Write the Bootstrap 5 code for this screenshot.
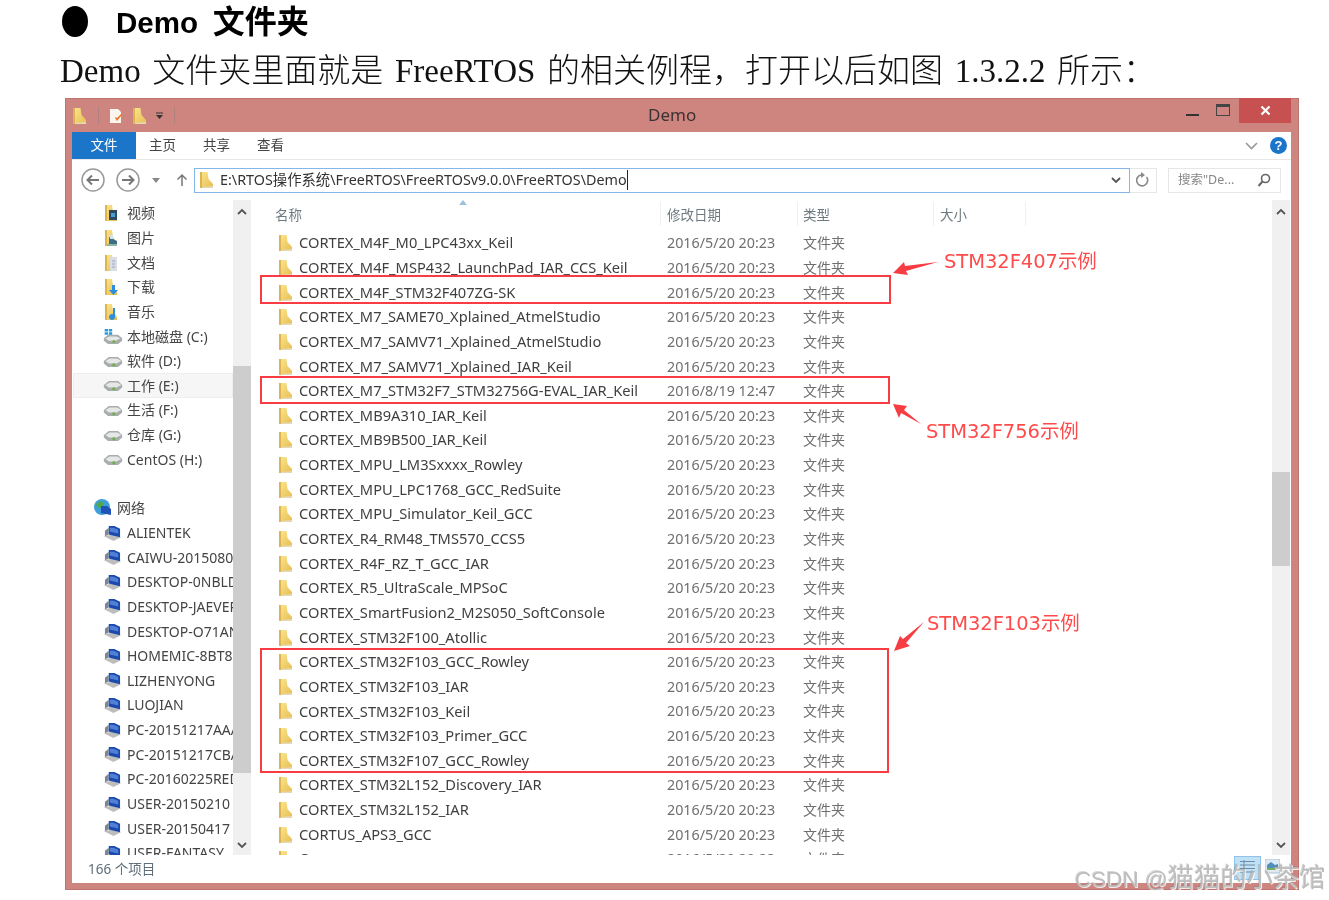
<!doctype html>
<html lang="zh-CN">
<head>
<meta charset="utf-8">
<title>Demo 文件夹</title>
<link href="https://cdn.jsdelivr.net/npm/bootstrap@5.3.0/dist/css/bootstrap.min.css" rel="stylesheet">
<style>
html,body{background:#fff;margin:0;height:900px;overflow:hidden}
.pg{position:relative;width:1329px;height:900px;filter:blur(.55px);font-family:"Noto Sans","Noto Sans CJK SC",sans-serif}
.hd-row{height:44px;padding-left:62px}
.bul{width:26px;height:31px;border-radius:50%;background:#000;margin-right:28px;margin-top:-2px}
.hd-txt{font-family:"Liberation Sans","Noto Sans CJK SC",sans-serif;font-weight:700;font-size:32px;line-height:44px;color:#000;white-space:pre}
.hd-txt i{font-style:normal;font-size:29.5px;margin-right:6px}
.para{height:54px;line-height:54px;padding-left:60px;font-family:"Liberation Serif","Noto Sans CJK SC",serif;font-size:33px;color:#111;white-space:pre;font-weight:300;word-spacing:3.4px}
.win{margin-left:65px;width:1234px;height:792px;background:#cf857f;border:1px solid #bd7570;padding:0 7px 6px 6px}
.tbar{height:33px;position:relative}
.tt{position:absolute;left:576px;top:4px;font-size:17px;line-height:24px;color:#3a3232}
.tsep{width:1px;height:17px;background:#b0807a}
.g11{margin-left:11px}.g9{margin-left:9px}.g8{margin-left:8px}.g10{margin-left:10px}
.tclose{position:absolute;right:0;top:-1px;width:52px;height:25px;background:#c75050}
.tmin{position:absolute;left:1114px;top:15px;width:13px;height:2px;background:#333}
.tmax{position:absolute;left:1144px;top:5px;width:14px;height:12px;border:1px solid #444;border-top-width:3px}
.inner{background:#fff;height:751px}
.rib{height:28px;border-bottom:1px solid #e8e8e8;font-size:13.5px;color:#444}
.ftab{width:64px;height:27px;background:#1b76c9;color:#fff;text-align:center;line-height:27px}
.rt{width:54px;line-height:27px}
.rt.first{margin-left:13px}
.addr{height:38px;padding-left:9px;padding-top:2px}
.abox{width:936px;height:25px;border:1px solid #86b6e8;margin-left:6px;font-size:14.35px;color:#333;padding:0 0 0 4px;white-space:nowrap}
.abox .path{margin-left:6px;border-right:1px solid #222;line-height:20px}
.rbox{width:27px;height:25px;border:1px solid #e6e6e6;border-left:0}
.sbox{width:113px;height:25px;border:1px solid #e6e6e6;margin-left:11px;padding:0 9px;font-size:12.5px;color:#888}
.main{height:657px}
.nvw{width:180px;flex:none;position:relative}
.nvl{width:161px;overflow:hidden;height:657px;padding-top:3px;font-size:14px;color:#444;white-space:nowrap}
.nrow{height:24.65px;padding-left:31px;line-height:24px}
.nrow svg{width:17px;height:18px;flex:none;margin-right:7px}
.nrow svg.dv{width:20px;height:13px;margin-right:4px}
.nrow svg.dc{width:20px;height:17px;margin-right:4px}
.nrow svg.cp{width:19px;height:17px;margin-right:5px}
.nrow.sel{background:#f6f6f6;outline:1px solid #eee;outline-offset:-1px;margin-left:1px;padding-left:30px}
.nrow.net{padding-left:21px}
.nrow.net svg{width:20px;height:20px;margin-right:4px}
.gapr{height:24px}
.sbv{position:absolute;width:18px;top:2px;height:655px;background:#f0f0f0}
.sbv.a{left:161px}
.sbv.b{left:1020px}
.thmb{position:absolute;left:0;right:0;background:#cdcdcd}
.chev{position:absolute;left:4px;width:10px;height:7px}
.lst{flex:1;min-width:0;padding-left:23px;position:relative}
.lhd{height:31px;font-size:13.5px;color:#6e7a80;position:relative}
.lhd span{position:absolute;top:7px}
.lsp{position:absolute;top:4px;width:1px;height:24px;background:#f0f0f0}
.srt{position:absolute;left:184px;top:2px;width:8px;height:5px}
.lbd{height:626px;overflow:hidden;padding-top:2px}
.frow{height:24.65px;line-height:24px;white-space:nowrap;font-size:14.65px;color:#3f3f3f}
.frow svg{width:15px;height:18px;flex:none;margin-left:3px;margin-right:6px}
.fn{width:368px;margin-bottom:2px}
.fd{width:136px;color:#6f6f6f;font-size:14.3px}
.ft{color:#6f6f6f;font-size:14px}
.stat{height:28px;font-size:13.5px;color:#5f6f7a;padding-left:16px;line-height:28px;position:relative}
.vic{position:absolute;left:1162px;top:1px;width:27px;height:24px;background:#bfe0f5;border:1px solid #8fc4e8}
.vic2{position:absolute;left:1193px;top:4px;width:15px;height:16px}
.rbx{position:absolute;border:2.5px solid #f73d43}
.rlb{position:absolute;font-family:"DejaVu Sans","Noto Sans CJK SC",sans-serif;font-size:19.5px;line-height:26px;color:#ff4b4b;white-space:nowrap;letter-spacing:-.05px}
.arw{position:absolute}
.wm{position:absolute;left:1075px;top:864px;font-size:22.5px;line-height:28px;color:#bdbdbd;white-space:nowrap;text-shadow:1px 1px 0 rgba(255,255,255,.8),-1px -1px 0 rgba(120,120,120,.3);font-family:"Liberation Sans","Noto Sans CJK SC",sans-serif}
.wm b{font-weight:400;font-size:26.3px}
</style>
</head>
<body>
<svg width="0" height="0" class="position-absolute">
<defs>
<linearGradient id="fg" x1="0" y1="0" x2="1" y2="1"><stop offset="0" stop-color="#fbe68f"/><stop offset="1" stop-color="#e8bd52"/></linearGradient>
<symbol id="fold" viewBox="0 0 15 18"><path d="M1 1h7.500l1 7 4.500 5v4H1z" fill="url(#fg)"/><path d="M1 1h2v16H1z" fill="#dcb550"/><path d="M3 16l11-1v2H3z" fill="#e3d9b8"/></symbol>
<g id="lbase"><path d="M2 1h7l1 7 4 6v3H2z" fill="url(#fg)"/><path d="M2 1h2v16H2z" fill="#dcb550"/></g>
<symbol id="lvid" viewBox="0 0 17 18"><use href="#lbase"/><path d="M6 6h8v10H6z" fill="#2c4a63"/><path d="M8 9h4v4H8z" fill="#4aa0c8"/></symbol>
<symbol id="limg" viewBox="0 0 17 18"><use href="#lbase"/><path d="M6 8l8 4v5H6z" fill="#3c6f86"/><path d="M7 6h3v4H7z" fill="#cfe4ee"/><path d="M4 15l10 0v2H4z" fill="#8fb7a8"/></symbol>
<symbol id="ldoc" viewBox="0 0 17 18"><use href="#lbase"/><path d="M7 3h7v14H7z" fill="#d8dde6"/><path d="M9 7h3M9 10h3M9 13h3" stroke="#9aa7bb"/></symbol>
<symbol id="ldl" viewBox="0 0 17 18"><use href="#lbase"/><path d="M9 7h3v5h3l-4.500 5L6 12h3z" fill="#2d8fdc"/></symbol>
<symbol id="lmus" viewBox="0 0 17 18"><use href="#lbase"/><path d="M10 5h2v9a3 3 0 1 1-2-2.800z" fill="#2d8fdc"/></symbol>
<symbol id="drv" viewBox="0 0 24 15"><path d="M1 7l6-5h11l5 5v3l-5 4H6l-5-4z" fill="#a9adad"/><path d="M3 7l5-3h9l5 3-6 3H7z" fill="#e6e8e8"/><circle cx="13" cy="11.500" r="2" fill="#6fb04d"/></symbol>
<symbol id="drc" viewBox="0 0 24 20"><path d="M1 12l5-4h12l5 4v3l-5 4H6l-5-4z" fill="#a9adad"/><path d="M3 12l5-2h8l5 2-6 3H7z" fill="#e6e8e8"/><circle cx="13" cy="16" r="1.800" fill="#6fb04d"/><path d="M2 1h4v3H2zM7 1h4v3H7zM2 5h4v3H2zM7 5h4v3H7z" fill="#1f9de0"/></symbol>
<symbol id="pc" viewBox="0 0 20 18"><path d="M1 12l9-2 9 3-8 4z" fill="#bdbdbd"/><path d="M6 1h6l6 3v9L6 10z" fill="#1c49ad"/><path d="M7 3h4l5 2v4L7 7z" fill="#4f80d6"/><path d="M2 6l4-3v7l-4 2z" fill="#7d8698"/></symbol>
<symbol id="dn" viewBox="0 0 10 7"><path d="M1 1l4 4 4-4" fill="none" stroke="#555" stroke-width="1.800"/></symbol>
<symbol id="up" viewBox="0 0 10 7"><path d="M1 6l4-4 4 4" fill="none" stroke="#555" stroke-width="1.800"/></symbol>
</defs>
</svg>

<div class="pg">
  <div class="hd-row d-flex align-items-center">
    <div class="bul"></div>
    <div class="hd-txt"><i>Demo</i> 文件夹</div>
  </div>
  <div class="para">Demo 文件夹里面就是 FreeRTOS 的相关例程，打开以后如图 1.3.2.2 所示：</div>

  <div class="win">
    <div class="tbar d-flex align-items-center">
      <svg width="15" height="20"><use href="#fold"/></svg>
      <div class="tsep g11"></div>
      <svg width="16" height="18" class="g9" viewBox="0 0 16 18"><path d="M2 2h8l3 3v11H2z" fill="#faf6ee"/><path d="M7 11l2 3 5-6-1-1-4 4-1-1z" fill="#e87a2c"/></svg>
      <svg width="15" height="20" class="g8"><use href="#fold"/></svg>
      <svg width="9" height="9" viewBox="0 0 9 9" class="g8"><path d="M1 2h7" stroke="#333" stroke-width="1"/><path d="M1 4h7L4.500 8z" fill="#333"/></svg>
      <div class="tsep g10"></div>
      <div class="tt">Demo</div>
      <div class="tmin"></div>
      <div class="tmax"></div>
      <div class="tclose d-flex align-items-center justify-content-center">
        <svg width="11" height="11" viewBox="0 0 11 11"><path d="M1.500 1.500l8 8M9.500 1.500l-8 8" stroke="#fff" stroke-width="2.200"/></svg>
      </div>
    </div>

    <div class="inner">
      <div class="rib d-flex align-items-start">
        <div class="ftab">文件</div>
        <div class="rt first">主页</div>
        <div class="rt">共享</div>
        <div class="rt">查看</div>
        <div class="ms-auto d-flex align-items-center me-1" style="height:27px">
          <svg width="13" height="8" viewBox="0 0 13 8" class="me-2"><path d="M1 1l5.500 5.500L12 1" fill="none" stroke="#999" stroke-width="1.600"/></svg>
          <svg width="17" height="17" viewBox="0 0 17 17" class="ms-1"><circle cx="8.500" cy="8.500" r="8.500" fill="#1b76c9"/><text x="8.500" y="13" font-size="13" font-weight="700" text-anchor="middle" fill="#fff" font-family="Liberation Sans">?</text></svg>
        </div>
      </div>

      <div class="addr d-flex align-items-center">
        <svg width="24" height="24" viewBox="0 0 24 24"><circle cx="12" cy="12" r="11" fill="#fff" stroke="#9a9a9a" stroke-width="1.500"/><path d="M18 12H7M11 7.500L6.500 12l4.500 4.500" fill="none" stroke="#777" stroke-width="2"/></svg>
        <svg width="24" height="24" viewBox="0 0 24 24" class="g11 me-2"><circle cx="12" cy="12" r="11" fill="#fff" stroke="#9a9a9a" stroke-width="1.500"/><path d="M6 12h11M13 7.500l4.500 4.500-4.500 4.500" fill="none" stroke="#777" stroke-width="2"/></svg>
        <svg width="8" height="5" viewBox="0 0 8 5" class="ms-1"><path d="M0 0h8L4 5z" fill="#888"/></svg>
        <svg width="12" height="14" viewBox="0 0 12 14" class="ms-3"><path d="M6 13V2M1.500 6.500L6 2l4.500 4.500" fill="none" stroke="#777" stroke-width="1.500"/></svg>
        <div class="abox d-flex align-items-center">
          <svg width="15" height="18"><use href="#fold"/></svg>
          <span class="path">E:\RTOS操作系统\FreeRTOS\FreeRTOSv9.0.0\FreeRTOS\Demo</span>
          <svg width="10" height="7" class="ms-auto me-2"><use href="#dn"/></svg>
        </div>
        <div class="rbox d-flex align-items-center justify-content-center">
          <svg width="14" height="16" viewBox="0 0 14 16"><path d="M10.500 5A5.500 5.500 0 1 1 5 3" fill="none" stroke="#888" stroke-width="1.600"/><path d="M5 0l4 3-4 3z" fill="#888"/></svg>
        </div>
        <div class="sbox d-flex align-items-center justify-content-between">
          <span>搜索"De...</span>
          <svg width="14" height="14" viewBox="0 0 14 14"><circle cx="8.500" cy="5.500" r="4" fill="none" stroke="#666" stroke-width="1.600"/><path d="M5.500 8.500L1.500 13" stroke="#666" stroke-width="2"/></svg>
        </div>
      </div>

      <div class="main d-flex">
        <div class="nvw">
          <div class="nvl">
            <div class="nrow d-flex align-items-center"><svg><use href="#lvid"/></svg>视频</div>
            <div class="nrow d-flex align-items-center"><svg><use href="#limg"/></svg>图片</div>
            <div class="nrow d-flex align-items-center"><svg><use href="#ldoc"/></svg>文档</div>
            <div class="nrow d-flex align-items-center"><svg><use href="#ldl"/></svg>下载</div>
            <div class="nrow d-flex align-items-center"><svg><use href="#lmus"/></svg>音乐</div>
            <div class="nrow d-flex align-items-center"><svg class="dc"><use href="#drc"/></svg>本地磁盘 (C:)</div>
            <div class="nrow d-flex align-items-center"><svg class="dv"><use href="#drv"/></svg>软件 (D:)</div>
            <div class="nrow sel d-flex align-items-center"><svg class="dv"><use href="#drv"/></svg>工作 (E:)</div>
            <div class="nrow d-flex align-items-center"><svg class="dv"><use href="#drv"/></svg>生活 (F:)</div>
            <div class="nrow d-flex align-items-center"><svg class="dv"><use href="#drv"/></svg>仓库 (G:)</div>
            <div class="nrow d-flex align-items-center"><svg class="dv"><use href="#drv"/></svg>CentOS (H:)</div>
            <div class="gapr"></div>
            <div class="nrow net d-flex align-items-center"><svg viewBox="0 0 20 20"><circle cx="9" cy="9" r="8" fill="#3f9fd8"/><path d="M3 6l5-3 3 3-3 4-4-1zM11 11l5-2v4l-4 3z" fill="#4fa84a"/><path d="M8 8h6l4 3v6l-10-2z" fill="#1f53b8"/></svg>网络</div>
            <div class="nrow d-flex align-items-center"><svg class="cp"><use href="#pc"/></svg>ALIENTEK</div>
            <div class="nrow d-flex align-items-center"><svg class="cp"><use href="#pc"/></svg>CAIWU-20150806</div>
            <div class="nrow d-flex align-items-center"><svg class="cp"><use href="#pc"/></svg>DESKTOP-0NBLDD</div>
            <div class="nrow d-flex align-items-center"><svg class="cp"><use href="#pc"/></svg>DESKTOP-JAEVER</div>
            <div class="nrow d-flex align-items-center"><svg class="cp"><use href="#pc"/></svg>DESKTOP-O71ANB</div>
            <div class="nrow d-flex align-items-center"><svg class="cp"><use href="#pc"/></svg>HOMEMIC-8BT8IR</div>
            <div class="nrow d-flex align-items-center"><svg class="cp"><use href="#pc"/></svg>LIZHENYONG</div>
            <div class="nrow d-flex align-items-center"><svg class="cp"><use href="#pc"/></svg>LUOJIAN</div>
            <div class="nrow d-flex align-items-center"><svg class="cp"><use href="#pc"/></svg>PC-20151217AAA</div>
            <div class="nrow d-flex align-items-center"><svg class="cp"><use href="#pc"/></svg>PC-20151217CBA</div>
            <div class="nrow d-flex align-items-center"><svg class="cp"><use href="#pc"/></svg>PC-20160225RED</div>
            <div class="nrow d-flex align-items-center"><svg class="cp"><use href="#pc"/></svg>USER-20150210</div>
            <div class="nrow d-flex align-items-center"><svg class="cp"><use href="#pc"/></svg>USER-20150417</div>
            <div class="nrow d-flex align-items-center"><svg class="cp"><use href="#pc"/></svg>USER-FANTASY</div>
          </div>
          <div class="sbv a">
            <div class="thmb" style="top:166px;height:407px"></div>
            <svg class="chev" style="top:8px"><use href="#up"/></svg>
            <svg class="chev" style="top:642px"><use href="#dn"/></svg>
          </div>
        </div>

        <div class="lst">
          <div class="lhd">
            <svg class="srt" viewBox="0 0 8 5"><path d="M0 5l4-5 4 5z" fill="#9cc3dd"/></svg>
            <span style="left:0">名称</span>
            <div class="lsp" style="left:385px"></div>
            <span style="left:392px">修改日期</span>
            <div class="lsp" style="left:522px"></div>
            <span style="left:528px">类型</span>
            <div class="lsp" style="left:658px"></div>
            <span style="left:665px">大小</span>
            <div class="lsp" style="left:750px"></div>
          </div>
          <div class="lbd">
            <div class="frow d-flex align-items-center"><svg><use href="#fold"/></svg><div class="fn">CORTEX_M4F_M0_LPC43xx_Keil</div><div class="fd">2016/5/20 20:23</div><div class="ft">文件夹</div></div>
            <div class="frow d-flex align-items-center"><svg><use href="#fold"/></svg><div class="fn">CORTEX_M4F_MSP432_LaunchPad_IAR_CCS_Keil</div><div class="fd">2016/5/20 20:23</div><div class="ft">文件夹</div></div>
            <div class="frow d-flex align-items-center"><svg><use href="#fold"/></svg><div class="fn">CORTEX_M4F_STM32F407ZG-SK</div><div class="fd">2016/5/20 20:23</div><div class="ft">文件夹</div></div>
            <div class="frow d-flex align-items-center"><svg><use href="#fold"/></svg><div class="fn">CORTEX_M7_SAME70_Xplained_AtmelStudio</div><div class="fd">2016/5/20 20:23</div><div class="ft">文件夹</div></div>
            <div class="frow d-flex align-items-center"><svg><use href="#fold"/></svg><div class="fn">CORTEX_M7_SAMV71_Xplained_AtmelStudio</div><div class="fd">2016/5/20 20:23</div><div class="ft">文件夹</div></div>
            <div class="frow d-flex align-items-center"><svg><use href="#fold"/></svg><div class="fn">CORTEX_M7_SAMV71_Xplained_IAR_Keil</div><div class="fd">2016/5/20 20:23</div><div class="ft">文件夹</div></div>
            <div class="frow d-flex align-items-center"><svg><use href="#fold"/></svg><div class="fn">CORTEX_M7_STM32F7_STM32756G-EVAL_IAR_Keil</div><div class="fd">2016/8/19 12:47</div><div class="ft">文件夹</div></div>
            <div class="frow d-flex align-items-center"><svg><use href="#fold"/></svg><div class="fn">CORTEX_MB9A310_IAR_Keil</div><div class="fd">2016/5/20 20:23</div><div class="ft">文件夹</div></div>
            <div class="frow d-flex align-items-center"><svg><use href="#fold"/></svg><div class="fn">CORTEX_MB9B500_IAR_Keil</div><div class="fd">2016/5/20 20:23</div><div class="ft">文件夹</div></div>
            <div class="frow d-flex align-items-center"><svg><use href="#fold"/></svg><div class="fn">CORTEX_MPU_LM3Sxxxx_Rowley</div><div class="fd">2016/5/20 20:23</div><div class="ft">文件夹</div></div>
            <div class="frow d-flex align-items-center"><svg><use href="#fold"/></svg><div class="fn">CORTEX_MPU_LPC1768_GCC_RedSuite</div><div class="fd">2016/5/20 20:23</div><div class="ft">文件夹</div></div>
            <div class="frow d-flex align-items-center"><svg><use href="#fold"/></svg><div class="fn">CORTEX_MPU_Simulator_Keil_GCC</div><div class="fd">2016/5/20 20:23</div><div class="ft">文件夹</div></div>
            <div class="frow d-flex align-items-center"><svg><use href="#fold"/></svg><div class="fn">CORTEX_R4_RM48_TMS570_CCS5</div><div class="fd">2016/5/20 20:23</div><div class="ft">文件夹</div></div>
            <div class="frow d-flex align-items-center"><svg><use href="#fold"/></svg><div class="fn">CORTEX_R4F_RZ_T_GCC_IAR</div><div class="fd">2016/5/20 20:23</div><div class="ft">文件夹</div></div>
            <div class="frow d-flex align-items-center"><svg><use href="#fold"/></svg><div class="fn">CORTEX_R5_UltraScale_MPSoC</div><div class="fd">2016/5/20 20:23</div><div class="ft">文件夹</div></div>
            <div class="frow d-flex align-items-center"><svg><use href="#fold"/></svg><div class="fn">CORTEX_SmartFusion2_M2S050_SoftConsole</div><div class="fd">2016/5/20 20:23</div><div class="ft">文件夹</div></div>
            <div class="frow d-flex align-items-center"><svg><use href="#fold"/></svg><div class="fn">CORTEX_STM32F100_Atollic</div><div class="fd">2016/5/20 20:23</div><div class="ft">文件夹</div></div>
            <div class="frow d-flex align-items-center"><svg><use href="#fold"/></svg><div class="fn">CORTEX_STM32F103_GCC_Rowley</div><div class="fd">2016/5/20 20:23</div><div class="ft">文件夹</div></div>
            <div class="frow d-flex align-items-center"><svg><use href="#fold"/></svg><div class="fn">CORTEX_STM32F103_IAR</div><div class="fd">2016/5/20 20:23</div><div class="ft">文件夹</div></div>
            <div class="frow d-flex align-items-center"><svg><use href="#fold"/></svg><div class="fn">CORTEX_STM32F103_Keil</div><div class="fd">2016/5/20 20:23</div><div class="ft">文件夹</div></div>
            <div class="frow d-flex align-items-center"><svg><use href="#fold"/></svg><div class="fn">CORTEX_STM32F103_Primer_GCC</div><div class="fd">2016/5/20 20:23</div><div class="ft">文件夹</div></div>
            <div class="frow d-flex align-items-center"><svg><use href="#fold"/></svg><div class="fn">CORTEX_STM32F107_GCC_Rowley</div><div class="fd">2016/5/20 20:23</div><div class="ft">文件夹</div></div>
            <div class="frow d-flex align-items-center"><svg><use href="#fold"/></svg><div class="fn">CORTEX_STM32L152_Discovery_IAR</div><div class="fd">2016/5/20 20:23</div><div class="ft">文件夹</div></div>
            <div class="frow d-flex align-items-center"><svg><use href="#fold"/></svg><div class="fn">CORTEX_STM32L152_IAR</div><div class="fd">2016/5/20 20:23</div><div class="ft">文件夹</div></div>
            <div class="frow d-flex align-items-center"><svg><use href="#fold"/></svg><div class="fn">CORTUS_APS3_GCC</div><div class="fd">2016/5/20 20:23</div><div class="ft">文件夹</div></div>
            <div class="frow d-flex align-items-center"><svg><use href="#fold"/></svg><div class="fn">Coverage</div><div class="fd">2016/5/20 20:23</div><div class="ft">文件夹</div></div>
          </div>
          <div class="sbv b">
            <div class="thmb" style="top:272px;height:94px"></div>
            <svg class="chev" style="top:8px"><use href="#up"/></svg>
            <svg class="chev" style="top:642px"><use href="#dn"/></svg>
          </div>
        </div>
      </div>

      <div class="stat">166 个项目
        <div class="vic d-flex align-items-center justify-content-center">
          <svg width="17" height="16" viewBox="0 0 17 16"><path d="M1 1.500h15M1 5h15M1 8.500h15M1 12h15M5 0v15" stroke="#6f8ea6" fill="none"/></svg>
        </div>
        <svg class="vic2" viewBox="0 0 15 16"><rect width="15" height="14" fill="#dfe9f1" stroke="#a9c2d6"/><path d="M2 6l4-3 4 3 3-1v6H2z" fill="#4f8fc0"/><path d="M2 9h11v2H2z" fill="#79b05a"/></svg>
      </div>
    </div>
  </div>

  <div class="rbx" style="left:260px;top:275px;width:631px;height:29px"></div>
  <div class="rbx" style="left:260px;top:376px;width:630px;height:28px"></div>
  <div class="rbx" style="left:260px;top:648px;width:629px;height:125px"></div>

  <svg class="arw" style="left:890px;top:255px" width="52" height="22" viewBox="0 0 52 22"><path d="M3 18L14 7l1 4L48 7 16 16l2 4z" fill="#f73d43"/></svg>
  <div class="rlb" style="left:944px;top:249px">STM32F407示例</div>
  <svg class="arw" style="left:890px;top:402px" width="34" height="26" viewBox="0 0 34 26"><path d="M3 2l14 2-3 4 17 14-20-11-2 5z" fill="#f73d43"/></svg>
  <div class="rlb" style="left:926px;top:419px">STM32F756示例</div>
  <svg class="arw" style="left:892px;top:620px" width="36" height="34" viewBox="0 0 36 34"><path d="M2 31l6-15 3 3L32 2 14 23l4 3z" fill="#f73d43"/></svg>
  <div class="rlb" style="left:927px;top:611px">STM32F103示例</div>

  <div class="wm">CSDN @<b>猫猫的小茶馆</b></div>
</div>
<script src="https://cdn.jsdelivr.net/npm/bootstrap@5.3.0/dist/js/bootstrap.bundle.min.js"></script>
</body>
</html>
